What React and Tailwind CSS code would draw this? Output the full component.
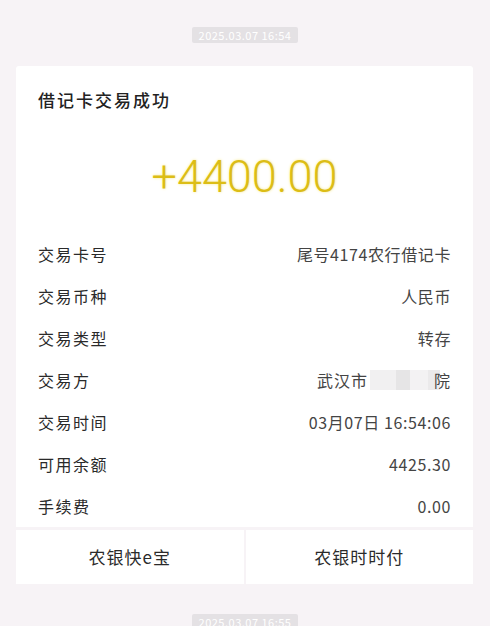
const rows = [
  ["交易卡号", "尾号4174农行借记卡"],
  ["交易币种", "人民币"],
  ["交易类型", "转存"],
  ["交易方", "武汉市"],
  ["交易时间", "03月07日 16:54:06"],
  ["可用余额", "4425.30"],
  ["手续费", "0.00"],
];

function Pill({ text }) {
  return (
    <div className="flex justify-center">
      <div className="bg-[#e4e1e4] text-white text-[11px] leading-[16px] px-[7px] rounded-[2px] tracking-[0.5px]">
        {text}
      </div>
    </div>
  );
}

export default function App() {
  return (
    <div className="w-[490px] h-[626px] overflow-hidden bg-[#f7f3f6] pt-[27px] font-['Noto_Sans_CJK_SC',sans-serif]">
      <Pill text="2025.03.07 16:54" />

      <div className="mx-[16px] mt-[23px] w-[457px]">
        <div className="bg-white px-[22px] pt-[22px] rounded-t-[3px]">
          <h1 className="text-[17px] leading-[24px] font-medium tracking-[2px] text-[#222]">
            借记卡交易成功
          </h1>

          <div className="mt-[37px] flex justify-center">
            <span className="font-['Roboto',sans-serif] font-light text-[45px] leading-[56px] text-[#dcbd16] [text-shadow:0_0_3px_#f7e98a]">
              +4400.00
            </span>
          </div>

          <div className="mt-[28px]">
            {rows.map(([label, value]) => (
              <div key={label} className="flex items-center justify-between h-[42px] text-[16px]">
                <span className="text-[#2a2a2a] tracking-[1.5px]">{label}</span>
                {label === "交易方" ? (
                  <span className="flex items-center text-[#444] tracking-[1px]">
                    {value}
                    <span className="inline-flex h-[20px] mx-[2px]">
                      <span className="w-[26px] bg-[#f1f0f1]" />
                      <span className="w-[14px] bg-[#e6e5e6]" />
                      <span className="w-[18px] bg-[#f3f2f3]" />
                      <span className="w-[12px] bg-[#ebeaeb]" />
                    </span>
                    <span className="-ml-[8px]">院</span>
                  </span>
                ) : (
                  <span className="text-[#444] tracking-[0.6px]">{value}</span>
                )}
              </div>
            ))}
          </div>
        </div>

        <div className="mt-[3px] flex gap-[2px] h-[54px]">
          <div className="flex-1 bg-white flex items-center justify-center text-[17px] text-[#2a2a2a] tracking-[1px]">
            农银快e宝
          </div>
          <div className="flex-1 bg-white flex items-center justify-center text-[17px] text-[#2a2a2a] tracking-[1px]">
            农银时时付
          </div>
        </div>
      </div>

      <div className="mt-[30px]">
        <Pill text="2025.03.07 16:55" />
      </div>
    </div>
  );
}
